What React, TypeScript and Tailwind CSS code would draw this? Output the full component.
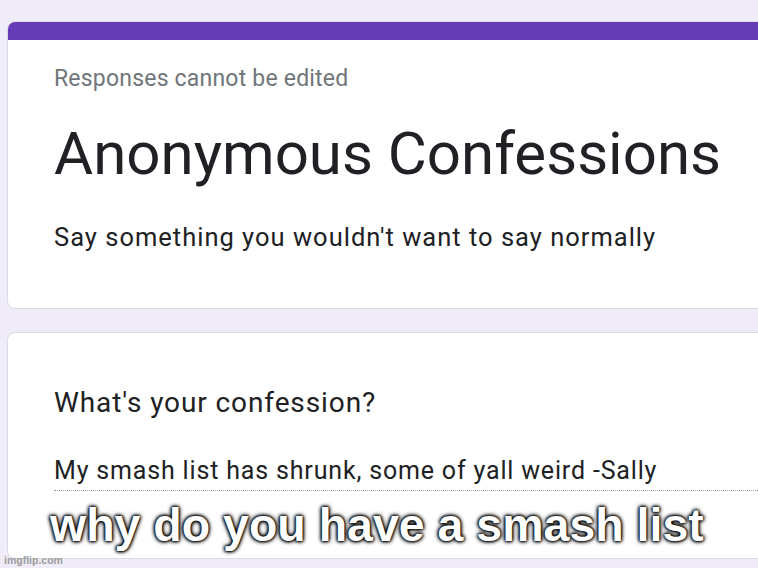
import React from 'react';

const FormCard: React.FC<{ children: React.ReactNode; accent?: boolean; className?: string }> = ({ children, accent, className }) => (
    <div className={`w-[800px] bg-white border border-[#dadce0] rounded-lg overflow-hidden ${className ?? ''}`}>
        {accent && <div className="h-[19px] bg-[#673ab7] -mt-px -mx-px" />}
        <div className="pl-[46px]">{children}</div>
    </div>
);

export default function App() {
    return (
        <div className="relative w-[758px] h-[568px] overflow-hidden bg-[#f0ebf8] pl-[7px] pt-[21px] font-['Roboto','Noto_Sans',sans-serif]">
            {/* Header card */}
            <FormCard accent className="h-[288px]">
                <p className="mt-[25px] text-[23px] leading-[28px] tracking-[0.2px] text-[#70757a]">Responses cannot be edited</p>
                <h1 className="mt-[25px] text-[60px] leading-[72px] text-[#202124]">Anonymous Confessions</h1>
                <p className="mt-[31px] text-[25.5px] leading-[32px] tracking-[1px] text-[#202124]">Say something you wouldn't want to say normally</p>
            </FormCard>

            {/* Question card */}
            <FormCard className="mt-[23px] h-[227px]">
                <p className="mt-[54px] text-[28px] leading-[32px] tracking-[0.9px] text-[#202124]">What's your confession?</p>
                <div className="mt-[38px] pb-[5px] border-b border-dotted border-[#9aa0a6]">
                    <p className="text-[25px] leading-[28px] tracking-[0.83px] text-[#202124]">My smash list has shrunk, some of yall weird -Sally</p>
                </div>
            </FormCard>

            {/* Meme caption */}
            <div className="absolute left-[50px] top-[502px] font-['Liberation_Sans',Arial,sans-serif] font-bold text-[46.5px] leading-[47px] text-white whitespace-nowrap [text-shadow:0_0_2px_#000,0_0_3px_#000,0_0_4px_#000,0_0_5px_#000]">
                why do you have a smash list
            </div>

            {/* Watermark */}
            <div className="absolute left-[4px] top-[554px] font-['Liberation_Sans',Arial,sans-serif] font-bold text-[10.5px] leading-[12px] text-[#9b9b9b]">
                imgflip.com
            </div>
        </div>
    );
}
